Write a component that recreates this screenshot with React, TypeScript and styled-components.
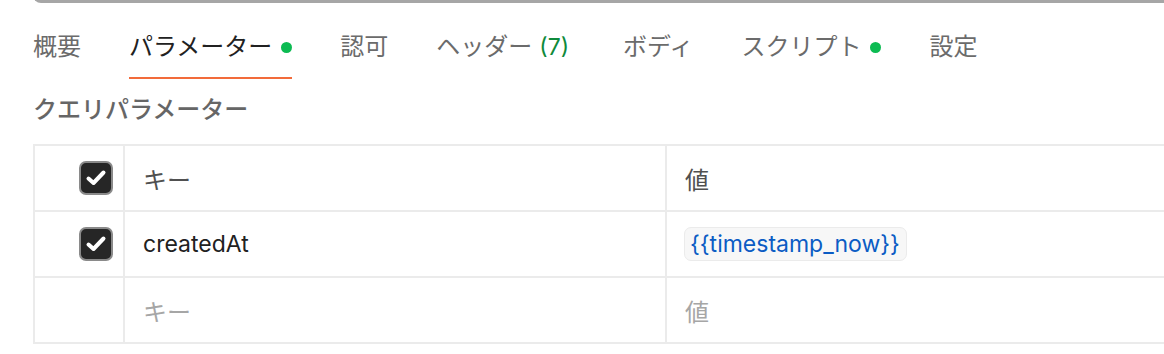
import * as React from 'react';
import styled, { createGlobalStyle } from 'styled-components';

const GlobalStyle = createGlobalStyle`
  html, body {
    margin: 0;
    padding: 0;
    background: #ffffff;
    overflow: hidden;
  }
  body {
    font-family: "Inter", "Noto Sans CJK JP", sans-serif;
    color: #212121;
  }
`;

const Page = styled.div`
  width: 1164px;
  height: 354px;
  overflow: hidden;
`;

const UrlBoxEdge = styled.div`
  margin-left: 33px;
  margin-top: -6px;
  height: 6px;
  border-left: 3px solid #a6a6a6;
  border-bottom: 3px solid #a6a6a6;
  border-bottom-left-radius: 8px;
`;

const TabBar = styled.div`
  display: flex;
  gap: 48px;
  padding: 0 33px;
  margin-top: 28px;
`;

const Tab = styled.div<{ $active?: boolean }>`
  display: flex;
  align-items: center;
  font-size: 24px;
  line-height: 32px;
  padding-bottom: 14px;
  color: ${(p) => (p.$active ? '#212121' : '#6b6b6b')};
  border-bottom: 2px solid ${(p) => (p.$active ? '#f26b3a' : 'transparent')};
`;

const Dot = styled.span`
  width: 11px;
  height: 11px;
  border-radius: 50%;
  background: #0cbb52;
  margin-left: 9px;
`;

const Count = styled.span`
  color: #0f8a3c;
  margin: 0 6px 0 7px;
  font-size: 23px;
`;

const SectionTitle = styled.div`
  margin: 15px 33px 0;
  font-size: 24px;
  line-height: 32px;
  font-weight: 500;
  color: #666666;
`;

const Table = styled.div`
  margin: 18px 0 0 33px;
  width: 1200px;
  display: grid;
  grid-template-columns: 90px 542px 1fr;
  border-top: 2px solid #ebebeb;
  border-left: 2px solid #ebebeb;
`;

const Cell = styled.div<{ $muted?: boolean; $check?: boolean }>`
  height: 64px;
  display: flex;
  align-items: center;
  justify-content: ${(p) => (p.$check ? 'flex-end' : 'flex-start')};
  padding: ${(p) => (p.$check ? '0 10px 0 0' : '0 18px')};
  border-right: 2px solid #ebebeb;
  border-bottom: 2px solid #ebebeb;
  font-size: ${(p) => (p.$muted ? '24px' : '23px')};
  color: ${(p) => (p.$muted ? '#a6a6a6' : '#212121')};
`;

const HeaderText = styled.span`
  color: #505050;
  font-size: 24px;
`;

const CheckBox = styled.span`
  width: 34px;
  height: 34px;
  box-sizing: border-box;
  border-radius: 7px;
  background: #262626;
  border: 2px solid #8a8a8a;
  display: flex;
  align-items: center;
  justify-content: center;
`;

const VarChip = styled.span`
  display: inline-flex;
  align-items: center;
  height: 34px;
  padding: 0 6px 0 5px;
  margin-left: -1px;
  box-sizing: border-box;
  background: #f7f7f7;
  border: 1px solid #ebebeb;
  border-radius: 7px;
  color: #0b5cc4;
  font-size: 23px;
`;

const Check = () => (
  <CheckBox>
    <svg width="24" height="24" viewBox="0 0 24 24">
      <path d="M4.5 12.5 L9.5 17 L19.5 6.5" fill="none" stroke="#ffffff" strokeWidth="4" strokeLinecap="round" strokeLinejoin="round" />
    </svg>
  </CheckBox>
);

export default function App() {
  return (
    <Page>
      <GlobalStyle />
      <UrlBoxEdge />
      <TabBar>
        <Tab>概要</Tab>
        <Tab $active>パラメーター<Dot /></Tab>
        <Tab>認可</Tab>
        <Tab>ヘッダー<Count>(7)</Count></Tab>
        <Tab>ボディ</Tab>
        <Tab>スクリプト<Dot /></Tab>
        <Tab>設定</Tab>
      </TabBar>
      <SectionTitle>クエリパラメーター</SectionTitle>
      <Table>
        <Cell $check><Check /></Cell>
        <Cell><HeaderText>キー</HeaderText></Cell>
        <Cell><HeaderText>値</HeaderText></Cell>

        <Cell $check><Check /></Cell>
        <Cell>createdAt</Cell>
        <Cell><VarChip>{'{{timestamp_now}}'}</VarChip></Cell>

        <Cell $check />
        <Cell $muted>キー</Cell>
        <Cell $muted>値</Cell>
      </Table>
    </Page>
  );
}
